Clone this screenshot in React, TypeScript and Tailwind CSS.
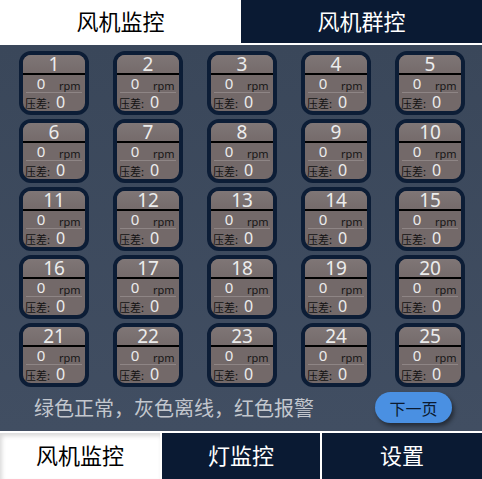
import React from "react";

const cjk = { fontFamily: '"Noto Sans CJK SC", "Noto Sans", sans-serif' };
const num = { fontFamily: '"Noto Sans", "Noto Sans CJK SC", sans-serif' };

function FanCard({ id }: { id: number }) {
  return (
    <div className="w-[70px] h-[64px] rounded-[12px] border-[4px] border-[#0c1d36] bg-[#736969] overflow-hidden flex flex-col">
      <div
        className="h-[18px] flex items-center justify-center text-[19px] leading-none text-[#ececec] bg-gradient-to-b from-[#7f7676] to-[#756b6b]"
        style={num}
      >
        {id}
      </div>
      <div className="h-[2px] bg-black" />
      <div className="h-[17px] flex items-center">
        <span className="w-[36px] text-center text-[15px] leading-none text-[#ececec]" style={num}>
          0
        </span>
        <span className="text-[11px] leading-none text-[#161616] mt-[3px]" style={num}>
          rpm
        </span>
      </div>
      <div className="mx-[3px] h-px bg-[#8e8585]" />
      <div className="flex-1 flex items-center pl-[2px]">
        <span className="text-[11px] leading-none text-[#121212] mt-[2px]" style={cjk}>
          压差:
        </span>
        <span className="ml-[6px] text-[16px] leading-none text-[#ececec]" style={num}>
          0
        </span>
      </div>
    </div>
  );
}

export default function App() {
  const fans = Array.from({ length: 25 }, (_, i) => i + 1);

  return (
    <div className="w-[482px] h-[479px] flex flex-col overflow-hidden bg-[#3c495c]" style={cjk}>
      {/* Top tabs */}
      <div className="h-[45px] flex shrink-0">
        <div className="w-[241px] bg-white flex items-center justify-center text-[22px] text-black pb-[5px]">
          风机监控
        </div>
        <div className="flex-1 bg-[#0a1a33] border-b-2 border-white flex items-center justify-center text-[22px] text-white pb-[3px]">
          风机群控
        </div>
      </div>

      {/* Fan grid */}
      <div className="flex-1 flex flex-col bg-gradient-to-b from-[#3a475a] to-[#414e62]">
        <div className="grid grid-cols-[repeat(5,70px)] gap-x-[24px] gap-y-[4px] pl-[19px] pt-[6px]">
          {fans.map((id) => (
            <FanCard key={id} id={id} />
          ))}
        </div>

        <div className="flex items-center pl-[34px] pr-[30px] pt-[5px]">
          <span className="flex-1 text-[20px] text-[#c3c7ce] leading-none">绿色正常，灰色离线，红色报警</span>
          <button className="w-[77px] h-[31px] rounded-full bg-[#4a90e2] text-[16px] text-[#0b1a30] shadow-[2px_3px_4px_rgba(0,0,0,0.45)]">
            下一页
          </button>
        </div>
      </div>

      {/* Bottom tabs */}
      <div className="h-[48px] shrink-0 flex border-t-2 border-white bg-white">
        <div className="w-[160px] bg-white flex items-center justify-center text-[22px] text-black pb-[4px] shadow-[inset_2px_3px_4px_rgba(0,0,0,0.15)]">
          风机监控
        </div>
        <div className="w-[158px] ml-[2px] bg-[#0a1a33] flex items-center justify-center text-[22px] text-white pb-[4px]">
          灯监控
        </div>
        <div className="flex-1 ml-[2px] bg-[#0a1a33] flex items-center justify-center text-[22px] text-white pb-[4px]">
          设置
        </div>
      </div>
    </div>
  );
}
